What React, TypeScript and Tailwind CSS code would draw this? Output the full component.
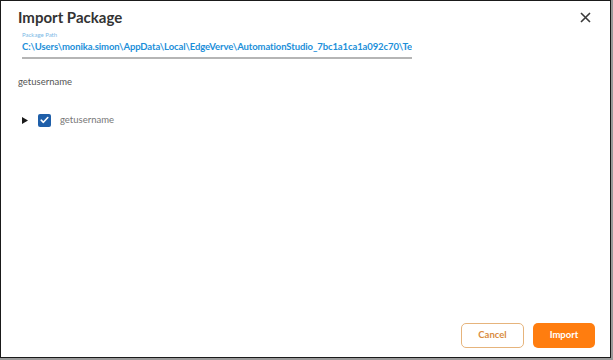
import React from 'react';

// Import Package dialog
const App: React.FC = () => {
  return (
    <div className="w-[613px] h-[360px] bg-[#9a9a9a] overflow-hidden" style={{ fontFamily: 'Lato, "Noto Sans", sans-serif' }}>
      <div className="w-[611px] h-[358px] bg-white border border-[#1a1a1a] flex flex-col">
        {/* header */}
        <div className="flex items-start justify-between pl-[17px] pr-[19px] pt-[3px]">
          <h1 className="text-[15px] font-bold text-[#333333] leading-[26px]">Import Package</h1>
          <button className="mt-[8px] text-[#333]">
            <svg width="11" height="11" viewBox="0 0 11 11" fill="none" stroke="#3a3a3a" strokeWidth="1.6">
              <path d="M1 1L10 10M10 1L1 10" />
            </svg>
          </button>
        </div>

        {/* package path field */}
        <div className="ml-[21px] mt-[1px] w-[390px]">
          <div className="text-[6px] leading-[8px] text-[#7ab8e6]">Package Path</div>
          <div className="text-[9.5px] font-bold tracking-[-0.1px] text-[#1c8fd9] leading-[16px] whitespace-nowrap overflow-hidden">
            C:\Users\monika.simon\AppData\Local\EdgeVerve\AutomationStudio_7bc1a1ca1a092c70\Temp\getusername
          </div>
          <div className="h-[2px] bg-[#b5b5b5] mt-[2px]" />
        </div>

        <div className="ml-[17px] mt-[16px] text-[9.5px] text-[#555] leading-[14px]">getusername</div>

        {/* tree */}
        <div className="flex items-center ml-[21px] mt-[24px] h-[14px]">
          <svg width="6" height="7" viewBox="0 0 6 7" fill="#1a1a1a"><path d="M0 0L6 3.5L0 7Z" /></svg>
          <div className="ml-[10px] w-[13px] h-[13px] rounded-[2px] bg-[#1f5fa9] flex items-center justify-center">
            <svg width="9" height="8" viewBox="0 0 9 8" fill="none" stroke="white" strokeWidth="1.6" strokeLinecap="round" strokeLinejoin="round">
              <path d="M1.2 4.2L3.4 6.3L7.8 1.5" />
            </svg>
          </div>
          <span className="ml-[9px] text-[9.5px] text-[#777]">getusername</span>
        </div>

        <div className="flex-1" />

        {/* footer */}
        <div className="flex justify-end gap-[9px] pr-[15px] pb-[9px]">
          <button className="w-[63px] h-[25px] rounded-[5px] border border-[#e6b47c] text-[#d98c3e] text-[9.5px] font-bold bg-white">
            Cancel
          </button>
          <button className="w-[62px] h-[25px] rounded-[5px] bg-[#ff7d0f] text-white text-[9.5px] font-bold">
            Import
          </button>
        </div>
      </div>
    </div>
  );
};

export default App;
